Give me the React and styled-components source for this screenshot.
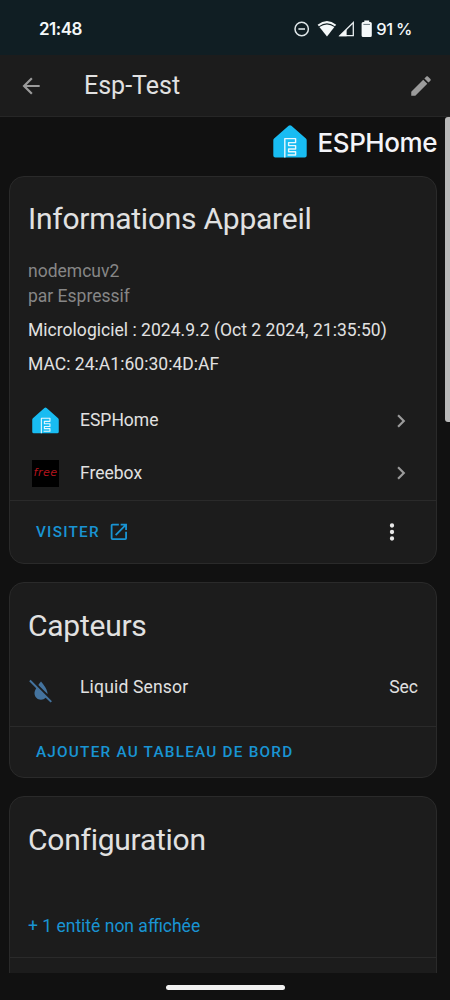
import React from "react";
import styled, { createGlobalStyle } from "styled-components";

const GlobalStyle = createGlobalStyle`
  *, *::before, *::after { box-sizing: border-box; }
  body { margin: 0; background: #111111; overflow: hidden; }
`;

const Screen = styled.div`
  width: 450px;
  height: 1000px;
  display: flex;
  flex-direction: column;
  overflow: hidden;
  background: #111111;
  color: #e1e1e1;
  font-family: Roboto, "Liberation Sans", sans-serif;
`;

const StatusBar = styled.header`
  flex: none;
  height: 55px;
  padding: 3px 38px 0 39px;
  display: flex;
  align-items: center;
  justify-content: space-between;
  background: #101e23;
  color: #f4f8f9;
  font: 600 17px/22px Inter, Roboto, sans-serif;
`;

const Clock = styled.time`
  letter-spacing: -0.5px;
`;

const StatusIcons = styled.div`
  display: flex;
  align-items: center;
  svg { display: block; }
`;

const Battery = styled.span`
  margin-left: 4.5px;
  letter-spacing: -0.4px;
  word-spacing: -0.8px;
  font-size: 16.5px;
  font-weight: 500;
`;

const AppBar = styled.div`
  flex: none;
  height: 62px;
  padding: 0 16px 0 18px;
  display: flex;
  align-items: center;
  background: #1c1c1c;
  border-bottom: 1px solid #262626;
`;

const Title = styled.h1`
  flex: 1;
  margin: 0 0 0 40px;
  font-size: 25px;
  font-weight: 400;
  line-height: 32px;
`;

const Icon = styled.svg`
  display: block;
  flex: none;
  width: ${(p) => p.$size || 26}px;
  height: ${(p) => p.$size || 26}px;
  fill: ${(p) => p.$color || "#9b9b9b"};
`;

const Viewport = styled.main`
  flex: none;
  height: 856px;
  display: flex;
  overflow: hidden;
`;

const Content = styled.div`
  flex: 1;
  padding-left: 9px;
  display: flex;
  flex-direction: column;
  gap: 18px;
`;

const ScrollTrack = styled.div`
  flex: none;
  width: 5px;
  margin-left: 8px;
`;

const ScrollThumb = styled.div`
  height: 305px;
  background: #b9b9b9;
  border-radius: 3px 0 0 3px;
`;

const Brand = styled.div`
  flex: none;
  height: 41px;
  padding-top: 8px;
  display: flex;
  align-items: flex-start;
  justify-content: flex-end;
  gap: 11px;
`;

const BrandName = styled.span`
  font: 500 26px/36px Inter, Roboto, sans-serif;
  letter-spacing: -0.45px;
  color: #f4f4f8;
  white-space: nowrap;
`;

const Card = styled.section`
  flex: none;
  width: 428px;
  height: ${(p) => p.$height}px;
  display: flex;
  flex-direction: column;
  background: #1c1c1c;
  border: 1px solid #2a2a2a;
  border-radius: 15px;
`;

const CardBody = styled.div`
  flex: 1;
  padding: ${(p) => p.$top || 22}px 18px 0;
  display: flex;
  flex-direction: column;
`;

const CardTitle = styled.h2`
  margin: 0 0 ${(p) => p.$gap}px;
  font-size: 30px;
  font-weight: 400;
  line-height: 40px;
  letter-spacing: -0.25px;
`;

const Line = styled.div`
  font-size: 17.5px;
  line-height: ${(p) => p.$height || 26}px;
  color: ${(p) => (p.$muted ? "#868686" : "#e1e1e1")};
  letter-spacing: ${(p) => p.$spacing || "0"};
  white-space: nowrap;
`;

const Integrations = styled.div`
  margin-top: 17.5px;
`;

const Row = styled.div`
  height: 52.5px;
  display: flex;
  align-items: center;
`;

const RowIcon = styled.div`
  flex: none;
  width: 52px;
  padding-left: ${(p) => p.$inset}px;
`;

const RowLabel = styled.span`
  flex: 1;
  font-size: 17.5px;
  line-height: 24px;
  padding-bottom: ${(p) => p.$lift || 1.5}px;
  letter-spacing: ${(p) => p.$spacing || "0"};
`;

const RowValue = styled.span`
  font-size: 17.5px;
  line-height: 24px;
  padding-bottom: 9px;
`;

const Chevron = styled.div`
  margin-right: 4px;
`;

const FreeTile = styled.div`
  width: 27px;
  height: 27px;
  display: flex;
  align-items: center;
  justify-content: center;
  background: #000;
  color: #b4141c;
  font: italic 400 11px/14px "DejaVu Sans", sans-serif;
  letter-spacing: 0.5px;
`;

const Actions = styled.footer`
  flex: none;
  height: ${(p) => p.$height}px;
  padding: 0 31px 0 26px;
  display: flex;
  align-items: center;
  justify-content: space-between;
  border-top: 1px solid #2a2a2a;
`;

const ActionButton = styled.button`
  padding: 0;
  border: 0;
  background: none;
  display: flex;
  align-items: center;
  gap: 8px;
  color: #1994d3;
  font: 500 15.3px/20px Roboto, sans-serif;
  letter-spacing: 1.23px;
  text-transform: uppercase;
`;

const MoreLink = styled.a`
  color: #1994d3;
  font-size: 17.5px;
  line-height: 24px;
`;

const GestureBar = styled.div`
  flex: 1;
  display: flex;
  justify-content: center;
  padding-top: 12px;
`;

const Pill = styled.div`
  width: 119px;
  height: 5px;
  border-radius: 3px;
  background: #f1f1f1;
`;

const HomeLogo = ({ width, height }) => (
  <svg width={width} height={height} viewBox="0 0 34 33" display="block">
    <path
      d="M15.6 .8Q17 -.4 18.4 .8L32.9 13.6Q33.7 14.3 33.7 15.6V30.6Q33.7 32.6 31.7 32.6H2.3Q.3 32.6 .3 30.6V15.6Q.3 14.3 1.1 13.6Z"
      fill="#18bcf2"
    />
    <path
      d="M11.8 32.5V13.6H22.6V17.6H15.6V20.6H22.6V24H15.6V26.8H22.6V30H14.6"
      fill="none"
      stroke="#e6f7fd"
      strokeWidth="1.4"
      strokeLinejoin="round"
    />
  </svg>
);

const paths = {
  back: "M20,11V13H8L13.5,18.5L12.08,19.92L4.16,12L12.08,4.08L13.5,5.5L8,11H20Z",
  pencil:
    "M20.71,7.04C21.1,6.65 21.1,6 20.71,5.63L18.37,3.29C18,2.9 17.35,2.9 16.96,3.29L15.12,5.12L18.87,8.87M3,17.25V21H6.75L17.81,9.93L14.06,6.18L3,17.25Z",
  chevron: "M8.59,16.58L13.17,12L8.59,7.41L10,6L16,12L10,18L8.59,16.58Z",
  open: "M14,3V5H17.59L7.76,14.83L9.17,16.24L19,6.41V10H21V3M19,19H5V5H12V3H5C3.89,3 3,3.9 3,5V19A2,2 0 0,0 5,21H19A2,2 0 0,0 21,19V12H19V19Z",
  dots: "M12,16A2,2 0 0,1 14,18A2,2 0 0,1 12,20A2,2 0 0,1 10,18A2,2 0 0,1 12,16M12,10A2,2 0 0,1 14,12A2,2 0 0,1 12,14A2,2 0 0,1 10,12A2,2 0 0,1 12,10M12,4A2,2 0 0,1 14,6A2,2 0 0,1 12,8A2,2 0 0,1 10,6A2,2 0 0,1 12,4Z",
  waterOff:
    "M20.84 22.73L16.29 18.18C15.2 19.3 13.69 20 12 20C8.69 20 6 17.31 6 14C6 12.67 6.67 11.03 7.55 9.44L1.11 3L2.39 1.73L22.11 21.46L20.84 22.73M18 14C18 10 12 3.25 12 3.25S10.84 4.55 9.55 6.35L17.95 14.75C18 14.5 18 14.25 18 14Z",
};

const Glyph = ({ name, size, color }) => (
  <Icon viewBox="0 0 24 24" $size={size} $color={color}>
    <path d={paths[name]} />
  </Icon>
);

const SystemGlyphs = () => (
  <svg width="78" height="18" viewBox="0 0 78 18" fill="#f4f8f9">
    <g fill="none" stroke="#dfe6e8" strokeWidth="1.5">
      <circle cx="7.7" cy="9" r="6.7" />
      <path d="M4.4 9H11" strokeWidth="1.6" />
    </g>
    <path d="M23.6 4.7Q33 -2.7 42.2 4.7L40.9 6.3Q33 .2 24.9 6.3Z" />
    <path d="M25.4 7.1Q33 1.9 40.4 7.1L33 16.4Z" />
    <path d="M59.3 2.6V15.7H46Z" fill="none" stroke="#e8eef0" strokeWidth="1.3" />
    <path d="M52.6 9.3V16.2H45Z" />
    <path d="M70.3 .6H75.2V2.1H76.3Q77.8 2.1 77.8 3.6V15.5Q77.8 17 76.3 17H69.1Q67.6 17 67.6 15.5V3.6Q67.6 2.1 69.1 2.1H70.3Z" />
    <path d="M69.4 4.4H76" stroke="#65747a" strokeWidth="1" />
  </svg>
);

export default function App() {
  return (
    <>
      <GlobalStyle />
      <Screen>
        <StatusBar>
          <Clock>21:48</Clock>
          <StatusIcons>
            <SystemGlyphs />
            <Battery>91 %</Battery>
          </StatusIcons>
        </StatusBar>
        <AppBar>
          <Glyph name="back" />
          <Title>Esp-Test</Title>
          <Glyph name="pencil" />
        </AppBar>
        <Viewport>
          <Content>
            <Brand>
              <HomeLogo width={34} height={33} />
              <BrandName>ESPHome</BrandName>
            </Brand>
            <Card $height={388}>
              <CardBody>
                <CardTitle $gap={19}>Informations Appareil</CardTitle>
                <Line $muted>nodemcuv2</Line>
                <Line $muted $height={25}>par Espressif</Line>
                <Line $height={42} $spacing="0.03px">
                  Micrologiciel : 2024.9.2 (Oct 2 2024, 21:35:50)
                </Line>
                <Line $height={26} $spacing="0.03px">MAC: 24:A1:60:30:4D:AF</Line>
                <Integrations>
                  <Row>
                    <RowIcon $inset={4}>
                      <HomeLogo width={27} height={27} />
                    </RowIcon>
                    <RowLabel>ESPHome</RowLabel>
                    <Chevron>
                      <Glyph name="chevron" />
                    </Chevron>
                  </Row>
                  <Row>
                    <RowIcon $inset={4}>
                      <FreeTile>free</FreeTile>
                    </RowIcon>
                    <RowLabel>Freebox</RowLabel>
                    <Chevron>
                      <Glyph name="chevron" />
                    </Chevron>
                  </Row>
                </Integrations>
              </CardBody>
              <Actions $height={64}>
                <ActionButton>
                  Visiter
                  <Glyph name="open" size={21.7} color="#1994d3" />
                </ActionButton>
                <Glyph name="dots" color="#e8e8e8" />
              </Actions>
            </Card>
            <Card $height={196}>
              <CardBody $top={23}>
                <CardTitle $gap={19}>Capteurs</CardTitle>
                <Row>
                  <RowIcon $inset={0}>
                    <Glyph name="waterOff" color="#44739e" />
                  </RowIcon>
                  <RowLabel $lift={9} $spacing="0.17px">Liquid Sensor</RowLabel>
                  <RowValue>Sec</RowValue>
                </Row>
              </CardBody>
              <Actions $height={51}>
                <ActionButton>Ajouter au tableau de bord</ActionButton>
              </Actions>
            </Card>
            <Card $height={220}>
              <CardBody $top={23}>
                <CardTitle $gap={54}>Configuration</CardTitle>
                <MoreLink>+ 1 entité non affichée</MoreLink>
              </CardBody>
              <Actions $height={58} />
            </Card>
          </Content>
          <ScrollTrack>
            <ScrollThumb />
          </ScrollTrack>
        </Viewport>
        <GestureBar>
          <Pill />
        </GestureBar>
      </Screen>
    </>
  );
}
